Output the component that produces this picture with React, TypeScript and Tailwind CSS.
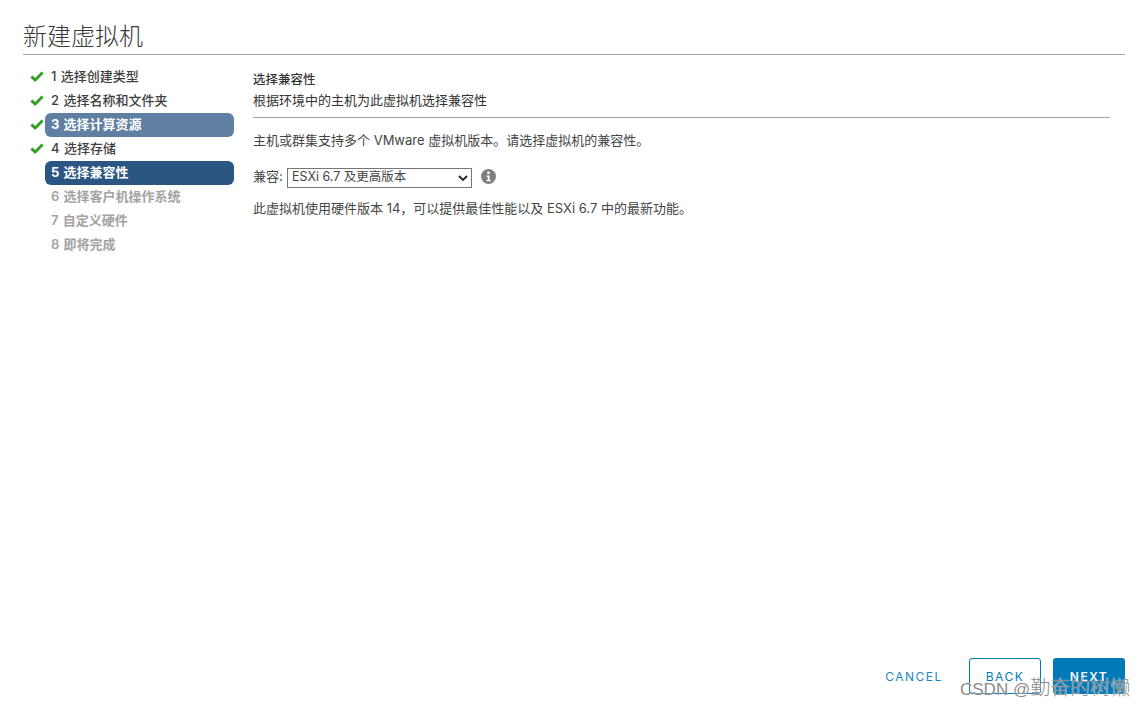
import React from "react";

const Check = () => (
  <svg width="14" height="12" viewBox="0 0 14 12" className="shrink-0">
    <path d="M0.4 6.6 L2.4 4.4 L5.2 7 L11.6 0.6 L13.6 2.6 L5.2 11 Z" fill="#2f9e1f" />
  </svg>
);

const steps = [
  { t: "1 选择创建类型", s: "done" },
  { t: "2 选择名称和文件夹", s: "done" },
  { t: "3 选择计算资源", s: "prev" },
  { t: "4 选择存储", s: "done" },
  { t: "5 选择兼容性", s: "cur" },
  { t: "6 选择客户机操作系统", s: "todo" },
  { t: "7 自定义硬件", s: "todo" },
  { t: "8 即将完成", s: "todo" },
];

export default function App() {
  return (
    <div className="relative w-[1146px] h-[708px] overflow-hidden bg-white flex flex-col font-['Inter','Noto_Sans_CJK_SC',sans-serif] text-[#333]">
      <header className="mt-[19px] ml-[23px] h-[36px] border-b border-[#a6a6a6] w-[1102px] shrink-0">
        <h1 className="text-[24px] leading-[31px] font-light text-[#3a3a3a] font-['Noto_Sans_CJK_SC',sans-serif]">新建虚拟机</h1>
      </header>
      <div className="flex flex-1 min-h-0 ml-[30px]">
        <nav className="w-[204px] pt-[10px] shrink-0 flex flex-col">
          {steps.map((st) => (
            <div key={st.t} className="flex items-center h-[24px]">
              <div className="w-[15px] shrink-0 flex items-center">{st.s === "todo" || st.s === "cur" ? null : <Check />}</div>
              <div
                className={
                  "w-[189px] h-[24px] rounded-[6px] pl-[6px] flex items-center text-[13px] whitespace-nowrap [word-spacing:1px] " +
                  (st.s === "prev"
                    ? "bg-[#5f7fa3] text-white font-bold"
                    : st.s === "cur"
                    ? "bg-[#2b5582] text-white font-bold"
                    : st.s === "todo"
                    ? "text-[#a3a3a3] font-semibold"
                    : "text-[#404040] font-medium")
                }
              >
                {st.t}
              </div>
            </div>
          ))}
        </nav>
        <main className="ml-[19px] w-[857px] pt-[14px] text-[12.5px] text-[#454545]">
          <div className="border-b border-[#a6a6a6] h-[49px]">
            <div className="h-[22px] leading-[22px] font-medium text-[#333]">选择兼容性</div>
            <div className="h-[22px] leading-[18px] text-[13px] text-[#333]">根据环境中的主机为此虚拟机选择兼容性</div>
          </div>
          <p className="mt-[13px] h-[22px] leading-[18px] text-[13px]">主机或群集支持多个 VMware 虚拟机版本。请选择虚拟机的兼容性。</p>
          <div className="mt-[13px] flex items-center h-[24px] text-[13px]">
            <span className="w-[34px] -mt-[2px]">兼容:</span>
            <div className="relative w-[185px] h-[20px] border border-[#767676] bg-white flex items-center pl-[4px] pb-[2px]">
              <span className="text-[12.5px]">ESXi 6.7 及更高版本</span>
              <svg width="10" height="6" viewBox="0 0 10 6" className="absolute right-[3px] top-[6px]">
                <path d="M1 1 L5 5 L9 1" fill="none" stroke="#222" strokeWidth="1.8" />
              </svg>
            </div>
            <svg width="15" height="15" viewBox="0 0 14 14" className="ml-[9px] -mt-[4px]">
              <circle cx="7" cy="7" r="7" fill="#808080" />
              <circle cx="7" cy="3.6" r="1.3" fill="#fff" />
              <path d="M5.2 6 H8 V10.2 H9 V11.4 H5.2 V10.2 H6.2 V7.2 H5.2 Z" fill="#fff" />
            </svg>
          </div>
          <p className="mt-[9px] h-[22px] leading-[18px] text-[13px]">此虚拟机使用硬件版本 14，可以提供最佳性能以及 ESXi 6.7 中的最新功能。</p>
        </main>
      </div>
      <footer className="flex justify-end items-center h-[36px] mb-[14px] mr-[21px] shrink-0 text-[12px] tracking-[1.5px] font-normal">
        <button className="w-[58px] mr-[26px] pt-[2px] text-[#1d87bd] text-center">CANCEL</button>
        <button className="w-[72px] h-[36px] mr-[12px] pt-[2px] border border-[#0079b8] rounded-[3px] text-[#0079b8]">BACK</button>
        <button className="w-[72px] h-[36px] pt-[2px] bg-[#0079b8] rounded-[3px] text-white font-semibold">NEXT</button>
      </footer>
      <div className="absolute left-[960px] top-[673px] text-[20px] leading-[28px] whitespace-nowrap text-[#8c8c8c] font-light [text-shadow:0_0_1px_#ffffff] font-['Noto_Sans_CJK_SC',sans-serif]">
        <span className="text-[17px] font-['Liberation_Sans',sans-serif]">CSDN @</span>勤奋的树懒
      </div>
    </div>
  );
}
